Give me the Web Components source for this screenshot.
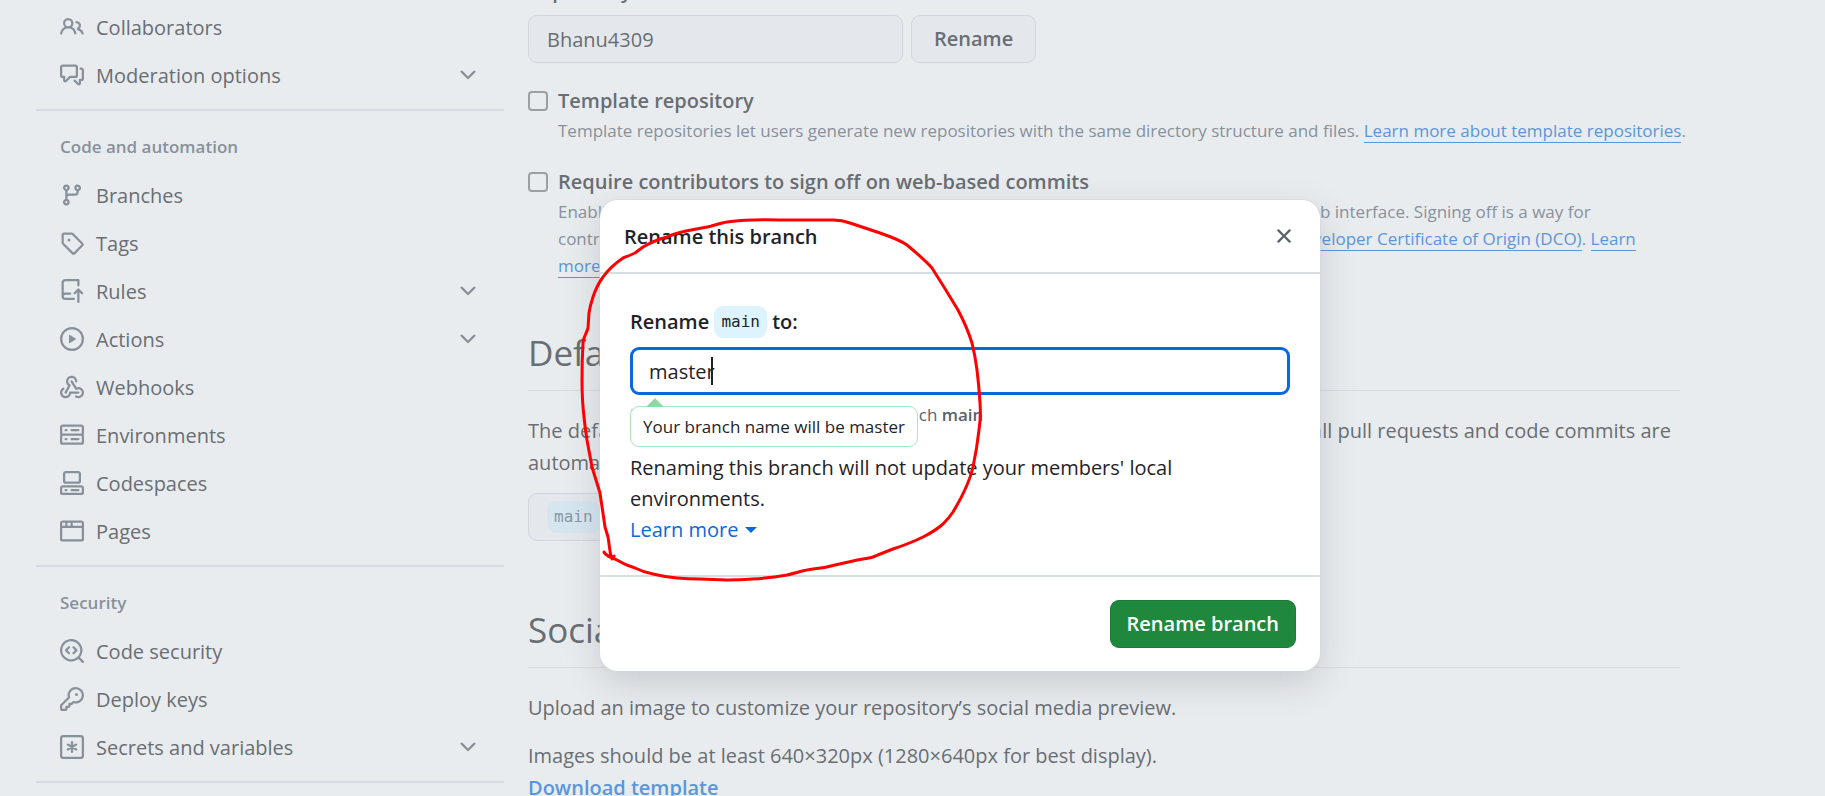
<!DOCTYPE html>
<html lang="en">
<head>
<meta charset="utf-8">
<title>Repository settings</title>
<style>
  html, body { margin: 0; height: 100%; overflow: hidden; }
  body {
    font-family: "Open Sans", "Noto Sans", sans-serif;
    font-size: 20px; line-height: 32px;
    background: #e9ecef; color: #696e73;
    --muted: #88919b; --line: #d6dce2; --link: #5a96dc;
  }
</style>
</head>
<body>
<settings-page></settings-page>
<script>
const ICONS = {
  people: '<path d="M2 5.5a3.5 3.5 0 1 1 5.898 2.549 5.508 5.508 0 0 1 3.034 4.084.75.75 0 1 1-1.482.235 4 4 0 0 0-7.9 0 .75.75 0 0 1-1.482-.236A5.507 5.507 0 0 1 3.102 8.05 3.493 3.493 0 0 1 2 5.5ZM11 4a3.001 3.001 0 0 1 2.22 5.018 5.01 5.01 0 0 1 2.56 3.012.749.749 0 0 1-.885.954.752.752 0 0 1-.549-.514 3.507 3.507 0 0 0-2.522-2.372.75.75 0 0 1-.574-.73v-.352a.75.75 0 0 1 .416-.672A1.5 1.5 0 0 0 11 5.5.75.75 0 0 1 11 4Zm-5.5-.5a2 2 0 1 0-.001 3.999A2 2 0 0 0 5.5 3.5Z"/>',
  discussion: '<path d="M1.75 1h8.5c.966 0 1.75.784 1.75 1.75v5.5A1.75 1.75 0 0 1 10.25 10H7.061l-2.574 2.573A1.458 1.458 0 0 1 2 11.543V10h-.25A1.75 1.75 0 0 1 0 8.25v-5.5C0 1.784.784 1 1.75 1ZM1.5 2.75v5.5c0 .138.112.25.25.25h1a.75.75 0 0 1 .75.75v2.19l2.72-2.72a.749.749 0 0 1 .53-.22h3.5a.25.25 0 0 0 .25-.25v-5.5a.25.25 0 0 0-.25-.25h-8.5a.25.25 0 0 0-.25.25Zm13 2a.25.25 0 0 0-.25-.25h-.5a.75.75 0 0 1 0-1.5h.5c.966 0 1.75.784 1.75 1.75v5.5A1.75 1.75 0 0 1 14.25 12H14v1.543a1.458 1.458 0 0 1-2.487 1.03L9.22 12.28a.749.749 0 0 1 .326-1.275.749.749 0 0 1 .734.215l2.22 2.22v-2.19a.75.75 0 0 1 .75-.75h1a.25.25 0 0 0 .25-.25Z"/>',
  branch: '<path d="M9.5 3.25a2.25 2.25 0 1 1 3 2.122V6A2.5 2.5 0 0 1 10 8.5H6a1 1 0 0 0-1 1v1.128a2.251 2.251 0 1 1-1.5 0V5.372a2.25 2.25 0 1 1 1.5 0v1.836A2.493 2.493 0 0 1 6 7h4a1 1 0 0 0 1-1v-.628A2.25 2.25 0 0 1 9.5 3.25Zm-6 0a.75.75 0 1 0 1.5 0 .75.75 0 0 0-1.5 0Zm8.25-.75a.75.75 0 1 0 0 1.5.75.75 0 0 0 0-1.5ZM4.25 12a.75.75 0 1 0 0 1.5.75.75 0 0 0 0-1.5Z"/>',
  tag: '<path d="M1 7.775V2.75C1 1.784 1.784 1 2.75 1h5.025c.464 0 .91.184 1.238.513l6.25 6.25a1.75 1.75 0 0 1 0 2.474l-5.026 5.026a1.75 1.75 0 0 1-2.474 0l-6.25-6.25A1.752 1.752 0 0 1 1 7.775Zm1.5 0c0 .066.026.13.073.177l6.25 6.25a.25.25 0 0 0 .354 0l5.025-5.025a.25.25 0 0 0 0-.354l-6.25-6.25a.25.25 0 0 0-.177-.073H2.75a.25.25 0 0 0-.25.25ZM6 5a1 1 0 1 1 0 2 1 1 0 0 1 0-2Z"/>',
  rules: '<g fill="none" stroke="currentColor" stroke-width="1.5" stroke-linecap="round" stroke-linejoin="round"><path d="M12.25 4.25V.75H3.5A1.75 1.75 0 0 0 1.75 2.5v9a1.75 1.75 0 0 0 1.75 1.75h5.75M1.75 11.5A1.75 1.75 0 0 1 3.5 9.75h3.25M12.25 15.25v-8M9.75 9.5l2.5-2.5 2.5 2.5"/></g>',
  play: '<path d="M8 0a8 8 0 1 1 0 16A8 8 0 0 1 8 0ZM1.5 8a6.5 6.5 0 1 0 13 0 6.5 6.5 0 0 0-13 0Zm4.879-2.773 4.264 2.559a.25.25 0 0 1 0 .428l-4.264 2.559A.25.25 0 0 1 6 10.559V5.442a.25.25 0 0 1 .379-.215Z"/>',
  webhook: '<path d="M5.5 4.25a2.25 2.25 0 0 1 4.5 0 .75.75 0 0 0 1.5 0 3.75 3.75 0 1 0-6.14 2.889l-2.272 4.258a.75.75 0 0 0 1.324.706L7 7.25a.75.75 0 0 0-.309-1.015A2.25 2.25 0 0 1 5.5 4.25Z"/><path d="M7.364 3.607a.75.75 0 0 1 1.03.257l2.608 4.349a3.75 3.75 0 1 1-.628 6.785.75.75 0 0 1 .752-1.299 2.25 2.25 0 1 0-.033-3.88.75.75 0 0 1-1.03-.256L7.107 4.636a.75.75 0 0 1 .257-1.03Z"/><path d="M2.9 8.776A.75.75 0 0 1 2.625 9.8 2.25 2.25 0 1 0 6 11.75a.75.75 0 0 1 .75-.751h5.5a.75.75 0 0 1 0 1.5H7.425a3.751 3.751 0 1 1-5.55-3.998.75.75 0 0 1 1.024.274Z"/>',
  server: '<path d="M1.75 1h12.5c.966 0 1.75.784 1.75 1.75v4c0 .372-.116.717-.314 1 .198.283.314.628.314 1v4a1.75 1.75 0 0 1-1.75 1.75H1.75A1.75 1.75 0 0 1 0 12.75v-4c0-.358.109-.707.314-1a1.739 1.739 0 0 1-.314-1v-4C0 1.784.784 1 1.75 1ZM1.5 2.75v4c0 .138.112.25.25.25h12.5a.25.25 0 0 0 .25-.25v-4a.25.25 0 0 0-.25-.25H1.75a.25.25 0 0 0-.25.25Zm.25 5.75a.25.25 0 0 0-.25.25v4c0 .138.112.25.25.25h12.5a.25.25 0 0 0 .25-.25v-4a.25.25 0 0 0-.25-.25ZM7 4.75A.75.75 0 0 1 7.75 4h4.5a.75.75 0 0 1 0 1.5h-4.5A.75.75 0 0 1 7 4.75ZM7.75 10h4.5a.75.75 0 0 1 0 1.5h-4.5a.75.75 0 0 1 0-1.5ZM3 4.75A.75.75 0 0 1 3.75 4h.5a.75.75 0 0 1 0 1.5h-.5A.75.75 0 0 1 3 4.75ZM3.75 10h.5a.75.75 0 0 1 0 1.5h-.5a.75.75 0 0 1 0-1.5Z"/>',
  codespaces: '<path d="M0 11.25c0-.966.784-1.75 1.75-1.75h12.5c.966 0 1.75.784 1.75 1.75v3A1.75 1.75 0 0 1 14.25 16H1.75A1.75 1.75 0 0 1 0 14.25Zm2-9.5C2 .784 2.784 0 3.75 0h8.5C13.216 0 14 .784 14 1.75v5a1.75 1.75 0 0 1-1.75 1.75h-8.5A1.75 1.75 0 0 1 2 6.75Zm1.75-.25a.25.25 0 0 0-.25.25v5c0 .138.112.25.25.25h8.5a.25.25 0 0 0 .25-.25v-5a.25.25 0 0 0-.25-.25Zm-2 9.5a.25.25 0 0 0-.25.25v3c0 .138.112.25.25.25h12.5a.25.25 0 0 0 .25-.25v-3a.25.25 0 0 0-.25-.25Z"/><path d="M7 12.75a.75.75 0 0 1 .75-.75h4.5a.75.75 0 0 1 0 1.5h-4.5a.75.75 0 0 1-.75-.75Zm-4 0a.75.75 0 0 1 .75-.75h.5a.75.75 0 0 1 0 1.5h-.5a.75.75 0 0 1-.75-.75Z"/>',
  browser: '<path d="M0 2.75C0 1.784.784 1 1.75 1h12.5c.966 0 1.75.784 1.75 1.75v10.5A1.75 1.75 0 0 1 14.25 15H1.75A1.75 1.75 0 0 1 0 13.25ZM14.5 6h-13v7.25c0 .138.112.25.25.25h12.5a.25.25 0 0 0 .25-.25Zm-6-3.5v2h6V2.75a.25.25 0 0 0-.25-.25ZM5 2.5v2h2v-2Zm-3.25 0a.25.25 0 0 0-.25.25V4.5h2v-2Z"/>',
  codescan: '<path d="M8.47 4.97a.75.75 0 0 0 0 1.06L9.94 7.5 8.47 8.97a.75.75 0 1 0 1.06 1.06l2-2a.75.75 0 0 0 0-1.06l-2-2a.75.75 0 0 0-1.06 0ZM6.53 6.03a.75.75 0 0 0-1.06-1.06l-2 2a.75.75 0 0 0 0 1.06l2 2a.75.75 0 1 0 1.06-1.06L5.06 7.5l1.47-1.47Z"/><path d="M12.246 13.307a7.501 7.501 0 1 1 1.06-1.06l2.474 2.473a.749.749 0 0 1-.326 1.275.749.749 0 0 1-.734-.215ZM1.5 7.5a6.002 6.002 0 0 0 3.608 5.504 6.002 6.002 0 0 0 6.486-1.117.748.748 0 0 1 .292-.293A6 6 0 1 0 1.5 7.5Z"/>',
  key: '<path d="M10.5 0a5.499 5.499 0 1 1-1.288 10.848l-.932.932a.749.749 0 0 1-.53.22H7v.75a.749.749 0 0 1-.22.53l-.5.5a.749.749 0 0 1-.53.22H5v.75a.749.749 0 0 1-.22.53l-.5.5a.749.749 0 0 1-.53.22h-2A1.75 1.75 0 0 1 0 14.25v-2c0-.199.079-.389.22-.53l4.932-4.932A5.5 5.5 0 0 1 10.5 0Zm-4 5.5c-.001.431.069.86.205 1.269a.75.75 0 0 1-.181.768L1.5 12.56v1.69c0 .138.112.25.25.25h1.69l.06-.06v-1.19a.75.75 0 0 1 .75-.75h1.19l.06-.06v-1.19a.75.75 0 0 1 .75-.75h1.19l1.023-1.025a.75.75 0 0 1 .768-.18A4 4 0 1 0 6.5 5.5ZM11 6a1 1 0 1 1 0-2 1 1 0 0 1 0 2Z"/>',
  asterisk: '<g fill="none" stroke="currentColor" stroke-width="1.5" stroke-linecap="round"><rect x=".75" y=".75" width="14.5" height="14.5" rx="1.5"/><path d="M8 4.75v6.5M5.2 6.4l5.6 3.2M10.8 6.4 5.2 9.6"/></g>',
  chevron: '<path d="M12.78 5.22a.749.749 0 0 1 0 1.06l-4.25 4.25a.749.749 0 0 1-1.06 0L3.22 6.28a.749.749 0 1 1 1.06-1.06L8 8.939l3.72-3.719a.749.749 0 0 1 1.06 0Z"/>',
  close: '<path d="M3.72 3.72a.75.75 0 0 1 1.06 0L8 6.94l3.22-3.22a.749.749 0 0 1 1.275.326.749.749 0 0 1-.215.734L9.06 8l3.22 3.22a.749.749 0 0 1-.326 1.275.749.749 0 0 1-.734-.215L8 9.06l-3.22 3.22a.751.751 0 0 1-1.042-.018.751.751 0 0 1-.018-1.042L6.94 8 3.72 4.78a.75.75 0 0 1 0-1.06Z"/>'
};

function define(name, render) {
  customElements.define(name, class extends HTMLElement {
    connectedCallback() {
      if (this.shadowRoot) return;
      const template = document.createElement('template');
      template.innerHTML = '<style>*{box-sizing:border-box}</style>' + render(this);
      this.attachShadow({ mode: 'open' }).append(template.content.cloneNode(true));
    }
  });
}

define('oct-icon', el => `
  <style>:host{display:block;flex:none;width:24px;height:24px} svg{display:block;width:100%;height:100%;fill:currentColor}</style>
  <svg viewBox="0 0 16 16" aria-hidden="true">${ICONS[el.getAttribute('name')]}</svg>`);

define('nav-item', el => `
  <style>
    :host{display:block}
    a{display:flex;align-items:center;gap:12px;height:48px;padding:0 24px;color:inherit;text-decoration:none}
    oct-icon{color:var(--muted)} span{flex:1;padding-top:2px}
  </style>
  <a href="#"><oct-icon name="${el.getAttribute('icon')}"></oct-icon><span><slot></slot></span>
  ${el.hasAttribute('expandable') ? '<oct-icon name="chevron"></oct-icon>' : ''}</a>`);

define('nav-section', el => `
  <style>
    :host{display:block;padding-bottom:10px;border-bottom:2px solid var(--line)}
    h3{margin:0;padding:20px 24px 8px;font-size:17px;font-weight:600;color:var(--muted)}
  </style>
  ${el.hasAttribute('heading') ? `<h3>${el.getAttribute('heading')}</h3>` : ''}<slot></slot>`);

define('settings-sidebar', () => `
  <style>:host{display:block;padding-top:3px}</style>
  <nav aria-label="Settings">
    <nav-section>
      <nav-item icon="people">Collaborators</nav-item>
      <nav-item icon="discussion" expandable>Moderation options</nav-item>
    </nav-section>
    <nav-section heading="Code and automation">
      <nav-item icon="branch">Branches</nav-item>
      <nav-item icon="tag">Tags</nav-item>
      <nav-item icon="rules" expandable>Rules</nav-item>
      <nav-item icon="play" expandable>Actions</nav-item>
      <nav-item icon="webhook">Webhooks</nav-item>
      <nav-item icon="server">Environments</nav-item>
      <nav-item icon="codespaces">Codespaces</nav-item>
      <nav-item icon="browser">Pages</nav-item>
    </nav-section>
    <nav-section heading="Security">
      <nav-item icon="codescan">Code security</nav-item>
      <nav-item icon="key">Deploy keys</nav-item>
      <nav-item icon="asterisk" expandable>Secrets and variables</nav-item>
    </nav-section>
  </nav>`);

define('branch-chip', () => `
  <style>:host{display:inline-block;height:32px;padding:0 7px;border-radius:9px;background:var(--chip,#ddf4ff);font:400 16px/32px "DejaVu Sans Mono",monospace;vertical-align:top}</style>
  <slot></slot>`);

define('check-field', el => `
  <style>
    :host{display:grid;grid-template-columns:20px 1fr;column-gap:10px}
    input{appearance:none;width:20px;height:20px;margin:6px 0 0;border:2px solid #9b9fa3;border-radius:4px}
    label{font-weight:600}
    p{grid-column:2;margin:0 -16px 0 0;font-size:17px;line-height:27px;color:var(--muted)}
  </style>
  <input type="checkbox" id="box"><label for="box">${el.getAttribute('label')}</label><p><slot></slot></p>`);

define('section-heading', () => `
  <style>:host{display:block;border-bottom:1px solid var(--line);padding-bottom:10px} h2{margin:0;font-size:35px;line-height:54px;font-weight:400}</style>
  <h2><slot></slot></h2>`);

define('settings-main', () => `
  <style>
    :host{display:block}
    .name{display:block;margin:-25px 0 8px;font-weight:600}
    .row{display:flex;gap:8px;margin-bottom:22px}
    .row input,.row button,.current{height:48px;border:1px solid #d0d7de;border-radius:9px;background:#e4e8ec;color:inherit;font:inherit}
    .row input{width:375px;padding:0 18px}
    .row button{padding:0 22px;font-weight:600}
    check-field + check-field{margin-top:22px}
    section-heading{margin-top:47px}
    p{margin:24px 0 0}
    p + p{margin-top:16px}
    a{color:var(--link);text-decoration:none}
    check-field a{display:inline-block;line-height:23px;border-bottom:1px solid}
    p a{font-weight:600}
    .current{display:flex;align-items:center;width:325px;margin:14px 0 62px;padding:0 18px;--chip:#d6e6f1;color:#8b98a3}
  </style>
  <main>
    <label class="name" for="repo">Repository name</label>
    <div class="row"><input id="repo" value="Bhanu4309"><button type="button">Rename</button></div>
    <check-field label="Template repository">Template repositories let users generate new repositories with the same directory structure and files. <a href="#">Learn more about template repositories</a>.</check-field>
    <check-field label="Require contributors to sign off on web-based commits">Enabling this setting will require contributors to sign off on commits posted through GitHub’s web interface. Signing off is a way for<br>contributors to affirm that their commit complies with the repository's terms, commonly the <a href="#">Developer Certificate of Origin (DCO)</a>. <a href="#">Learn</a><br><a href="#">more about signing off on commits</a>.</check-field>
    <section-heading>Default branch</section-heading>
    <p>The default branch is considered the “base” branch in your repository against which all pull requests and code commits are<br>automatically made, unless you specify a different branch.</p>
    <div class="current"><branch-chip>main</branch-chip></div>
    <section-heading>Social preview</section-heading>
    <p>Upload an image to customize your repository’s social media preview.</p>
    <p>Images should be at least 640×320px (1280×640px for best display).<br><a href="#">Download template</a></p>
  </main>`);

define('rename-dialog', () => `
  <style>
    :host{display:block;background:#fff;border-radius:18px;color:#1f2328;box-shadow:0 0 0 1px #d0d7de80,0 12px 36px #424a5333}
    header{display:flex;align-items:center;justify-content:space-between;padding:20px 24px;border-bottom:2px solid #d6dde3}
    h1{margin:0;padding-top:2px;font-size:20px;line-height:30px;font-weight:600}
    header button{display:flex;padding:0;border:0;background:none;color:#59636e}
    .body{padding:32px 30px 29px}
    label{display:block;font-weight:600;margin-bottom:9px}
    .field{position:relative}
    .field input{display:block;width:100%;height:48px;padding:0 16px;border:3px solid #0969da;border-radius:9px;background:#fff;font:inherit;color:inherit;outline:0}
    .caret{position:absolute;left:81px;top:10px;width:2px;height:28px;background:#1f2328}
    .hint{position:relative;margin:6px 0 24px;font-size:17px;line-height:27px;color:#59636e}
    .hint b{font-weight:600}
    .tip{position:absolute;left:0;top:5px;padding:6px 12px;border:1px solid #aee5bd;border-radius:9px;background:#fff;color:#1f2328;white-space:nowrap}
    .tip::before{content:"";position:absolute;left:15px;bottom:100%;border:9px solid transparent;border-top:0;border-bottom-color:#8ddba4}
    p{margin:0;line-height:31px}
    a{display:inline-flex;align-items:center;gap:7px;color:#0969da;text-decoration:none}
    a::after{content:"";border:6px solid transparent;border-bottom:0;border-top-color:currentColor}
    footer{display:flex;justify-content:flex-end;padding:23px 24px;border-top:2px solid #d6dde3}
    footer button{height:48px;padding:0 16px;border:1px solid #1c7c38;border-radius:9px;background:#1f883d;color:#fff;font:inherit;font-weight:600}
  </style>
  <section role="dialog" aria-labelledby="title">
    <header><h1 id="title">Rename this branch</h1><button type="button" aria-label="Close"><oct-icon name="close"></oct-icon></button></header>
    <div class="body">
      <label for="branch">Rename <branch-chip>main</branch-chip> to:</label>
      <div class="field"><input id="branch" value="master"><span class="caret"></span></div>
      <div class="hint">Enter the new name for the old branch <b>main</b><div class="tip" role="status">Your branch name will be master</div></div>
      <p>Renaming this branch will not update your members' local<br>environments.</p>
      <a href="#">Learn more</a>
    </div>
    <footer><button type="button">Rename branch</button></footer>
  </section>`);

define('pen-mark', () => `
  <style>:host{display:block;pointer-events:none} svg{display:block;overflow:visible}</style>
  <svg width="400" height="370" viewBox="581 215 400 370" fill="none" stroke="#f00" stroke-width="3" stroke-linecap="round" stroke-linejoin="round" aria-hidden="true">
    <path d="M604 552C606 556 610 557 615 559Q625 565 635 568Q643 572 653 574Q665 577 677 578Q688 579 700 579L727 580Q740 580 753 579Q770 578 787 575C797 573 803 570 813 569Q825 568 835 565L853 561C860 559 867 559 873 557Q880 554 893 549Q911 543 923 537Q935 531 943 524C949 518 949 518 953 512Q962 497 967 485Q971 476 973 467Q977 448 979 430Q981 417 980 403Q979 386 977 370Q975 355 972 343Q967 327 958 310Q946 290 932 268Q925 260 907 245Q900 240 880 233L850 223Q842 220 833 220H780Q750 219 727 222C720 223 713 226 707 227L686 231Q673 234 667 237Q655 240 643 247L635 253Q626 257 623 258Q610 267 603 277Q597 285 593 297Q590 306 589 313L588 328C586 335 584 335 583 343Q582 360 582 380Q582 400 584 417Q585 427 587 440L592 467L600 493L605 527L608 537C610 548 609 551 612 559L614 556"/>
  </svg>`);

define('settings-page', () => `
  <style>
    :host{display:block;position:relative;height:100%;overflow:hidden}
    .layout{display:grid;grid-template-columns:468px minmax(0,1fr);column-gap:24px;padding:0 145px 0 36px}
    rename-dialog{position:absolute;left:600px;top:200px;width:720px}
    pen-mark{position:absolute;left:581px;top:215px}
  </style>
  <div class="layout"><settings-sidebar></settings-sidebar><settings-main></settings-main></div>
  <rename-dialog></rename-dialog>
  <pen-mark></pen-mark>`);
</script>
</body>
</html>
